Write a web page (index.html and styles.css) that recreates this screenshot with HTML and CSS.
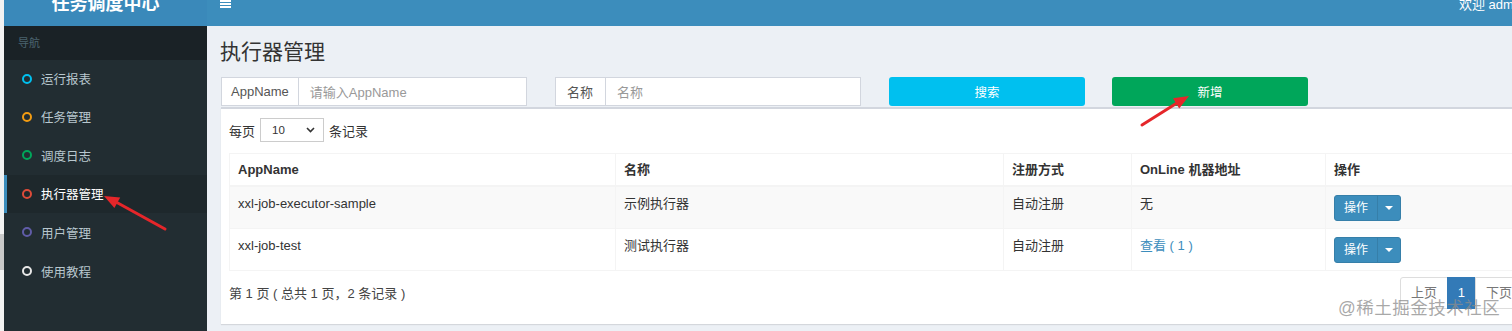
FILE: index.html
```html
<!DOCTYPE html>
<html lang="zh-CN">
<head>
    <meta charset="UTF-8">
    <meta name="viewport" content="width=device-width, initial-scale=1.0">
    <title>执行器管理</title>
    <link rel="stylesheet" href="styles.css">
</head>
<body>
    <div class="edge"><span class="edge-mark"></span></div>
    <div class="app">
        <header class="topbar">
            <div class="logo">任务调度中心</div>
            <nav class="navbar">
                <span class="toggle"><i></i><i></i><i></i></span>
                <span class="welcome">欢迎 admin</span>
            </nav>
        </header>
        <div class="main-row">
            <aside class="sidebar">
                <div class="nav-header">导航</div>
                <ul class="menu">
                    <li><span class="ring ring-aqua"></span>运行报表</li>
                    <li><span class="ring ring-orange"></span>任务管理</li>
                    <li><span class="ring ring-green"></span>调度日志</li>
                    <li class="active"><span class="ring ring-red"></span>执行器管理</li>
                    <li><span class="ring ring-purple"></span>用户管理</li>
                    <li><span class="ring ring-white"></span>使用教程</li>
                </ul>
            </aside>
            <main class="content">
                <h1 class="page-title">执行器管理</h1>
                <div class="search-row">
                    <div class="input-group">
                        <span class="addon addon-app">AppName</span>
                        <span class="field">请输入AppName</span>
                    </div>
                    <div class="input-group">
                        <span class="addon">名称</span>
                        <span class="field">名称</span>
                    </div>
                    <button class="btn btn-info">搜索</button>
                    <button class="btn btn-success">新增</button>
                </div>
                <div class="box">
                    <div class="length">
                        每页
                        <span class="select">10
                            <svg width="9" height="6" viewBox="0 0 9 6"><path d="M1 1l3.5 3.5L8 1" fill="none" stroke="#333" stroke-width="1.6"/></svg>
                        </span>
                        条记录
                    </div>
                    <table class="grid">
                        <thead>
                            <tr>
                                <th class="c-app">AppName</th>
                                <th class="c-name">名称</th>
                                <th class="c-type">注册方式</th>
                                <th class="c-online">OnLine 机器地址</th>
                                <th>操作</th>
                            </tr>
                        </thead>
                        <tbody>
                            <tr class="odd">
                                <td>xxl-job-executor-sample</td>
                                <td>示例执行器</td>
                                <td>自动注册</td>
                                <td>无</td>
                                <td><span class="op"><span class="op-main">操作</span><span class="op-caret"></span></span></td>
                            </tr>
                            <tr>
                                <td>xxl-job-test</td>
                                <td>测试执行器</td>
                                <td>自动注册</td>
                                <td><a class="link">查看 ( 1 )</a></td>
                                <td><span class="op"><span class="op-main">操作</span><span class="op-caret"></span></span></td>
                            </tr>
                        </tbody>
                    </table>
                    <div class="footer">
                        <span class="info">第 1 页 ( 总共 1 页，2 条记录 )</span>
                        <ul class="pager">
                            <li>上页</li>
                            <li class="current">1</li>
                            <li>下页</li>
                        </ul>
                    </div>
                </div>
            </main>
        </div>
    </div>

    <!-- annotation arrows from the screenshot -->
    <svg class="marks" width="1512" height="331" viewBox="0 0 1512 331">
        <line x1="165" y1="229" x2="116" y2="202" stroke="#e5262a" stroke-width="3" stroke-linecap="round"/>
        <polygon points="104,196 120.2,197.4 114.4,208" fill="#e5262a"/>
        <line x1="1142" y1="125" x2="1177" y2="103" stroke="#e5262a" stroke-width="3" stroke-linecap="round"/>
        <polygon points="1189,96 1179.2,108.4 1173,98.2" fill="#e5262a"/>
    </svg>
    <div class="watermark">@稀土掘金技术社区</div>
</body>
</html>
```

FILE: styles.css
```css
* {
    box-sizing: border-box;
}
html, body {
    margin: 0;
    height: 331px;
    overflow: hidden;
}
body {
    display: flex;
    background: #f2f2f2;
    font-family: "Liberation Sans", "Noto Sans CJK SC", sans-serif;
    font-size: 13px;
    color: #333;
    position: relative;
}
.edge {
    width: 4px;
    flex: none;
}
.edge-mark {
    display: block;
    margin-top: 234px;
    height: 36px;
    background: #c9c9c9;
}
.app {
    flex: 1;
    display: flex;
    flex-direction: column;
    min-width: 0;
}

/* top bar */
.topbar {
    display: flex;
    height: 26px;
    flex: none;
    overflow: hidden;
}
.logo {
    width: 203px;
    background: #3a89ba;
    color: #fff;
    font-size: 18px;
    font-weight: bold;
    text-align: center;
    line-height: 8px;
}
.navbar {
    flex: 1;
    display: flex;
    background: #3c8dbc;
    padding-left: 13px;
    color: #fff;
}
.toggle {
    display: flex;
    flex-direction: column;
    gap: 1px;
    width: 11px;
}
.toggle i {
    display: block;
    height: 2px;
    background: #fff;
}
.welcome {
    margin-left: auto;
    margin-right: -12px;
    line-height: 10px;
    font-size: 13px;
}

.main-row {
    flex: 1;
    display: flex;
    min-height: 0;
}

/* sidebar */
.sidebar {
    width: 203px;
    flex: none;
    background: #222d32;
}
.nav-header {
    height: 34px;
    line-height: 34px;
    background: #1a2226;
    color: #4b646f;
    font-size: 11px;
    padding-left: 14px;
}
.menu {
    list-style: none;
    margin: 0;
    padding: 0;
}
.menu li {
    display: flex;
    align-items: center;
    height: 38.6px;
    padding-left: 15px;
    color: #b8c7ce;
    font-size: 12.5px;
    border-left: 3px solid transparent;
}
.menu li:first-child {
    height: 37.4px;
}
.menu li.active {
    background: #1e282c;
    border-left-color: #3c8dbc;
    color: #fff;
}
.ring {
    width: 10px;
    height: 10px;
    border-radius: 50%;
    border: 2px solid;
    margin-right: 9px;
}
.ring-aqua { border-color: #00c0ef; }
.ring-orange { border-color: #f39c12; }
.ring-green { border-color: #00a65a; }
.ring-red { border-color: #dd4b39; }
.ring-purple { border-color: #605ca8; }
.ring-white { border-color: #e8e8e8; }

/* content */
.content {
    flex: 1;
    background: #ecf0f5;
    padding-left: 14px;
    overflow: hidden;
    min-width: 0;
}
.page-title {
    margin: 11px 0 0 -1px;
    font-size: 21px;
    font-weight: normal;
    line-height: 30px;
    color: #333;
}
.search-row {
    display: flex;
    margin-top: 10px;
    height: 29px;
    width: 1400px;
}
.input-group {
    display: flex;
    width: 306px;
    margin-right: 28px;
    border: 1px solid #d2d6de;
    background: #fff;
}
.addon {
    display: flex;
    align-items: center;
    padding: 0 12px 0 11px;
    border-right: 1px solid #d2d6de;
    color: #555;
}
.addon-app {
    padding: 0 9px;
}
.field {
    display: flex;
    align-items: center;
    padding-left: 11px;
    color: #999;
}
.btn {
    width: 196px;
    border: none;
    border-radius: 3px;
    color: #fff;
    font-family: inherit;
    font-size: 12.5px;
    margin-right: 27px;
    padding: 0;
}
.btn-info {
    background: #00c0ef;
}
.btn-success {
    background: #00a65a;
}

/* box */
.box {
    margin-top: 1px;
    width: 1330px;
    background: #fff;
    border-top: 2px solid #d2d6de;
    padding: 9px 8px 0;
    height: 217px;
    box-shadow: 0 1px 1px rgba(0, 0, 0, 0.1);
}
.length {
    display: flex;
    align-items: center;
    gap: 5px;
    height: 24px;
}
.select {
    display: flex;
    align-items: center;
    justify-content: space-between;
    width: 64px;
    height: 24px;
    border: 1px solid #ccc;
    padding: 0 8px 0 11px;
    font-size: 11.5px;
}
.grid {
    margin-top: 11px;
    width: 1314px;
    border-collapse: collapse;
    table-layout: fixed;
}
.grid th, .grid td {
    text-align: left;
    vertical-align: top;
    padding: 8px 8px 7px;
    border: 1px solid #f4f4f4;
    line-height: 18px;
}
.grid th {
    padding-top: 7px;
    padding-bottom: 6px;
    font-weight: bold;
    border-bottom-width: 2px;
}
.c-app { width: 386px; }
.c-name { width: 388px; }
.c-type { width: 128px; }
.c-online { width: 194px; }
.grid tr.odd td {
    background: #f9f9f9;
}
.link {
    color: #3c8dbc;
}
.op {
    display: inline-flex;
    height: 26px;
    vertical-align: top;
    border: 1px solid #367fa9;
    border-radius: 3px;
    background: #3c8dbc;
    color: #fff;
    font-size: 12px;
}
.op-main {
    display: flex;
    align-items: center;
    padding: 0 9px;
    border-right: 1px solid #367fa9;
}
.op-caret {
    display: flex;
    align-items: center;
    justify-content: center;
    width: 22px;
}
.op-caret::after {
    content: "";
    border-left: 4px solid transparent;
    border-right: 4px solid transparent;
    border-top: 4px solid #fff;
}
.footer {
    display: flex;
    justify-content: space-between;
    align-items: center;
    width: 1314px;
    margin-top: 6px;
}
.info {
    color: #444;
    margin-bottom: 2px;
}
.pager {
    display: flex;
    list-style: none;
    margin: 0 20px 0 0;
    padding: 0;
}
.pager li {
    padding: 6px 10px;
    border: 1px solid #ddd;
    margin-left: -1px;
    color: #777;
    line-height: 18px;
}
.pager li:first-child {
    border-radius: 3px 0 0 3px;
}
.pager li.current {
    background: #337ab7;
    border-color: #337ab7;
    color: #fff;
    width: 29px;
    padding: 6px 0;
    text-align: center;
}

/* overlays */
.marks {
    position: absolute;
    top: 0;
    left: 0;
    pointer-events: none;
}
.watermark {
    position: absolute;
    left: 1338px;
    top: 294px;
    font-size: 17.5px;
    color: rgba(140, 140, 140, 0.75);
    letter-spacing: 0.5px;
}
```
